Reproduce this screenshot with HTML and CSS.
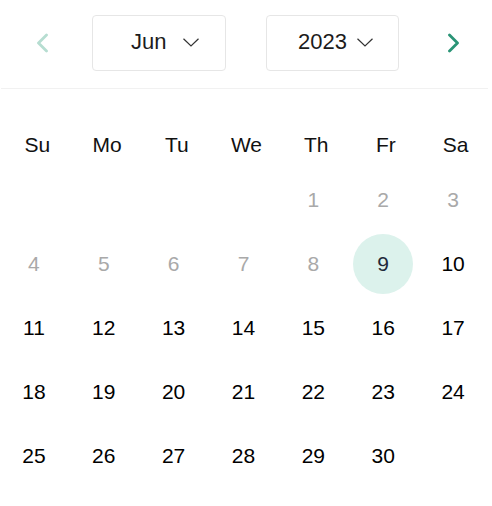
FILE: index.html
```html
<!DOCTYPE html>
<html lang="en">
<head>
    <meta charset="UTF-8">
    <meta name="viewport" content="width=device-width, initial-scale=1.0">
    <title>Date Picker</title>
    <link rel="stylesheet" href="styles.css">
</head>
<body>
    <div class="calendar">
        <div class="header">
            <button class="nav prev">
                <svg width="12" height="20" viewBox="0 0 12 20"><polyline points="10.5,2 2.5,10 10.5,18" fill="none" stroke="#b6ddd1" stroke-width="2.8" stroke-linecap="round" stroke-linejoin="round"/></svg>
            </button>
            <div class="select month">
                <span>Jun</span>
                <svg width="16" height="9" viewBox="0 0 16 9"><polyline points="0.5,0.8 8,8 15.5,0.8" fill="none" stroke="#333" stroke-width="1.2"/></svg>
            </div>
            <div class="select year">
                <span>2023</span>
                <svg width="16" height="9" viewBox="0 0 16 9"><polyline points="0.5,0.8 8,8 15.5,0.8" fill="none" stroke="#333" stroke-width="1.2"/></svg>
            </div>
            <button class="nav next">
                <svg width="12" height="20" viewBox="0 0 12 20"><polyline points="1.5,2 9.5,10 1.5,18" fill="none" stroke="#2a9476" stroke-width="2.8" stroke-linecap="round" stroke-linejoin="round"/></svg>
            </button>
        </div>

        <div class="weekdays">
            <div>Su</div><div>Mo</div><div>Tu</div><div>We</div><div>Th</div><div>Fr</div><div>Sa</div>
        </div>

        <div class="days" id="days"></div>
    </div>

    <script>
        const days = document.getElementById('days');
        const firstDay = 4;
        const selected = 9;
        const today = 9;

        for (let i = 0; i < firstDay; i++) {
            days.appendChild(document.createElement('div'));
        }

        for (let d = 1; d <= 30; d++) {
            const cell = document.createElement('div');
            const num = document.createElement('span');
            num.textContent = d;
            if (d < today) {
                cell.classList.add('disabled');
            }
            if (d === selected) {
                cell.classList.add('selected');
            }
            cell.appendChild(num);
            days.appendChild(cell);
        }
    </script>
</body>
</html>
```

FILE: styles.css
```css
body {
    margin: 0;
    background-color: #fff;
    font-family: "Liberation Sans", Arial, sans-serif;
    color: #000;
}

.calendar {
    width: 488px;
}

.header {
    display: flex;
    align-items: center;
    margin-left: 1px;
    width: 487px;
    padding: 15px 0 17px 29px;
    box-sizing: border-box;
    border-bottom: 1px solid #f1f1f1;
}

.nav {
    width: 24px;
    height: 56px;
    padding: 0;
    border: none;
    background: none;
    display: flex;
    justify-content: center;
    align-items: center;
    cursor: pointer;
}

.select {
    height: 56px;
    box-sizing: border-box;
    border: 1px solid #e6e6e6;
    border-radius: 4px;
    display: flex;
    align-items: center;
    padding-bottom: 2px;
    font-size: 22px;
    color: #1c1c1c;
}

.select svg {
    margin-top: 1px;
}

.month {
    width: 134px;
    margin-left: 38px;
    padding-left: 38px;
}

.month svg {
    margin-left: 17px;
}

.year {
    width: 133px;
    margin-left: 40px;
    padding-left: 31px;
}

.year svg {
    margin-left: 10px;
}

.next {
    margin-left: 43px;
}

.weekdays {
    display: grid;
    grid-template-columns: repeat(7, 1fr);
    margin-top: 36px;
    height: 40px;
    line-height: 40px;
    font-size: 21px;
    color: #111;
}

.weekdays div {
    text-align: center;
    padding-left: 5px;
}

.days {
    display: grid;
    grid-template-columns: repeat(7, 1fr);
    grid-auto-rows: 64px;
    margin-top: 3px;
    margin-left: -1px;
    font-size: 21px;
}

.days div {
    display: flex;
    justify-content: center;
    align-items: center;
}

.days span {
    width: 60px;
    height: 60px;
    border-radius: 50%;
    display: flex;
    justify-content: center;
    align-items: center;
}

.days .disabled span {
    color: #a9a9a9;
}

.days .selected span {
    background-color: #dcf2ec;
    color: #1f2a3a;
}
```
